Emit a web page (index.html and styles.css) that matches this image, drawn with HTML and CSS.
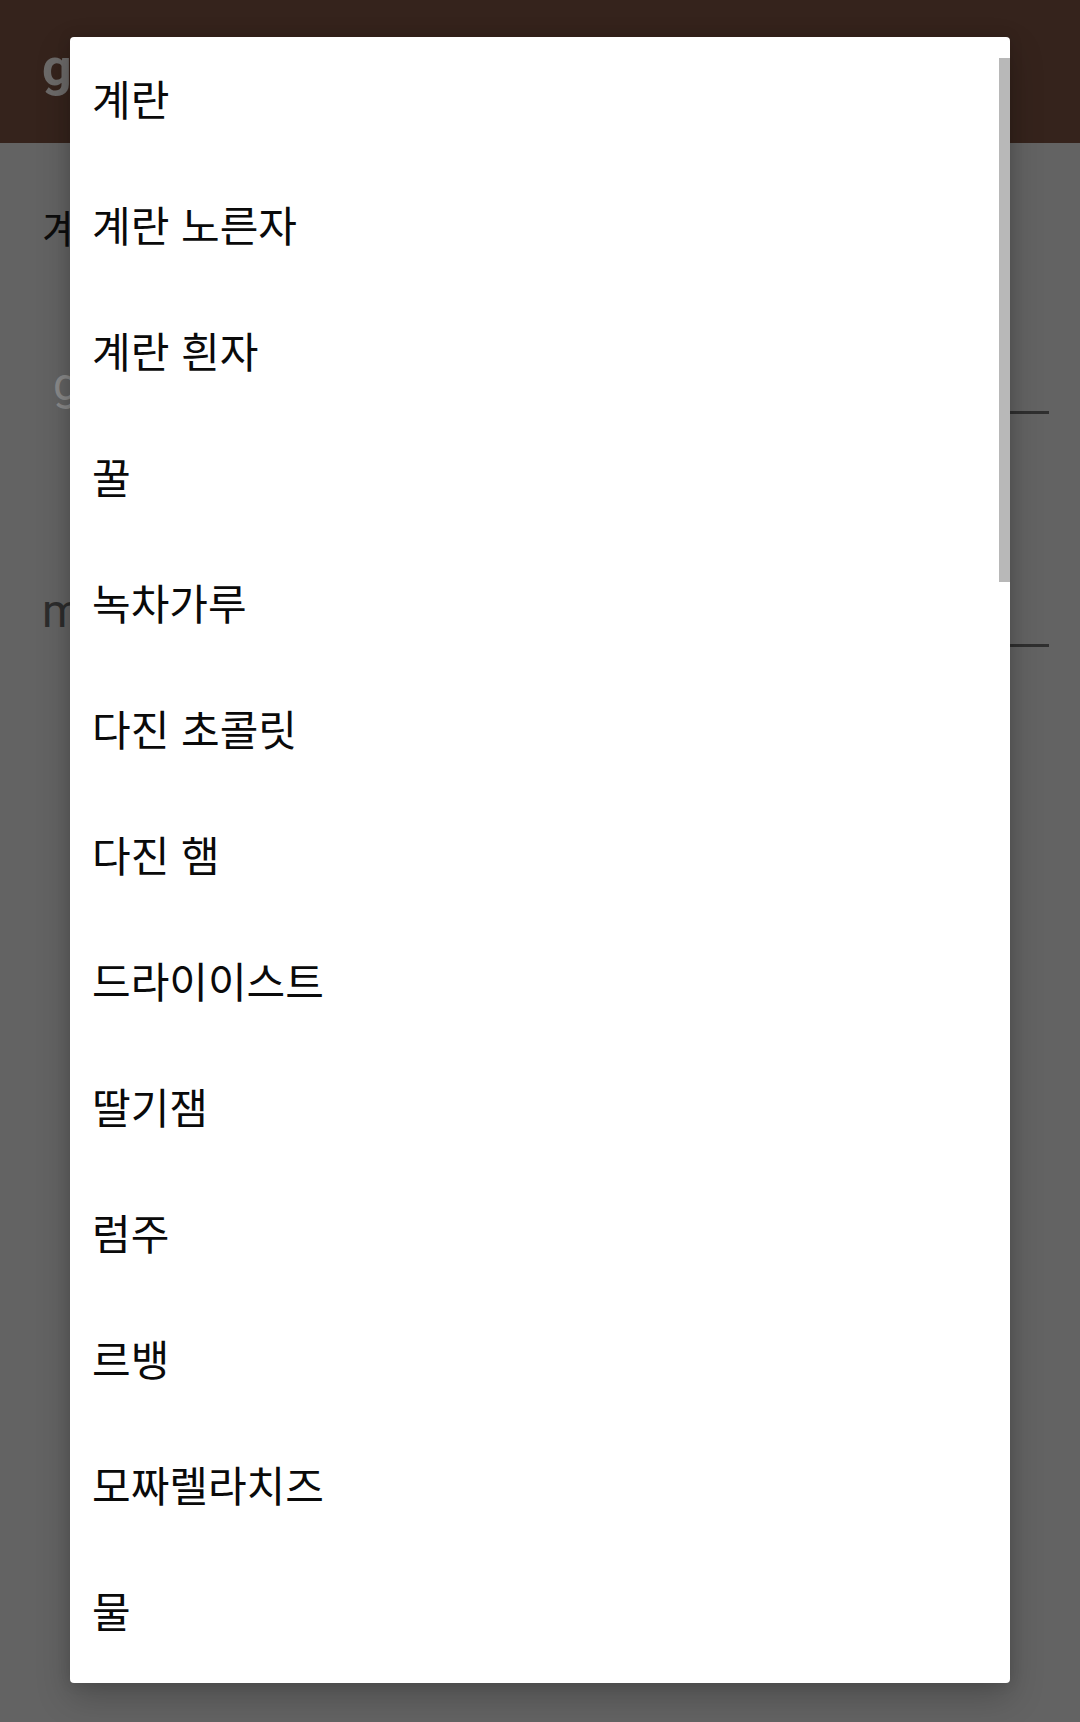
FILE: index.html
```html
<!DOCTYPE html>
<html lang="ko">
<head>
<meta charset="utf-8">
<title>재료 선택</title>
<link rel="stylesheet" href="styles.css">
</head>
<body>
<div class="screen">
  <header class="appbar">
    <span class="appbar-title">g</span>
  </header>
  <main class="content">
    <div class="label">계</div>
    <div class="field">
      <span class="hint hint-light">g</span>
      <div class="field-input"></div>
    </div>
    <div class="field field-second">
      <span class="hint hint-dark">m</span>
      <div class="field-input"></div>
    </div>
  </main>

  <div class="dropdown">
    <ul class="options">
      <li class="option">계란</li>
      <li class="option">계란 노른자</li>
      <li class="option">계란 흰자</li>
      <li class="option">꿀</li>
      <li class="option">녹차가루</li>
      <li class="option">다진 초콜릿</li>
      <li class="option">다진 햄</li>
      <li class="option">드라이이스트</li>
      <li class="option">딸기잼</li>
      <li class="option">럼주</li>
      <li class="option">르뱅</li>
      <li class="option">모짜렐라치즈</li>
      <li class="option">물</li>
    </ul>
    <div class="scroll-thumb"></div>
  </div>
</div>
</body>
</html>
```
FILE: styles.css
```css
html, body {
  margin: 0;
  padding: 0;
}

body {
  width: 1080px;
  height: 1722px;
  overflow: hidden;
  background: #636363;
  font-family: "Noto Sans CJK KR", "Noto Sans", Roboto, sans-serif;
}

.screen {
  position: relative;
  width: 1080px;
  height: 1722px;
}

.appbar {
  height: 143px;
  background: #35231c;
  display: flex;
  align-items: center;
  padding-left: 42px;
  box-sizing: border-box;
}

.appbar-title {
  font-family: Roboto, "Noto Sans CJK KR", sans-serif;
  font-weight: 700;
  font-size: 52px;
  color: #6c6a69;
  line-height: 1;
  margin-top: -8px;
}

.content {
  padding: 0 31px 0 42px;
}

.label {
  margin-top: 60px;
  height: 48px;
  line-height: 48px;
  font-size: 42px;
  color: #0c0c0c;
}

.field {
  height: 63px;
  margin-top: 100px;
  display: flex;
  align-items: flex-start;
}

.field-second {
  margin-top: 170px;
}

.field-input {
  flex: 1;
  height: 60px;
  margin-left: 40px;
  border-bottom: 3px solid #2f2f2f;
}

.hint {
  font-family: Roboto, "Noto Sans", sans-serif;
  font-size: 46px;
  line-height: 1;
}

.hint-light {
  color: #8a8a8a;
  padding-left: 11px;
  margin-top: 10px;
}

.hint-dark {
  color: #2c2c2c;
  margin-top: 4px;
}

.dropdown {
  position: absolute;
  left: 70px;
  top: 37px;
  width: 940px;
  height: 1646px;
  background: #ffffff;
  border-radius: 4px;
  overflow: hidden;
  box-shadow: 0 14px 34px rgba(0, 0, 0, 0.22), 0 0 14px rgba(0, 0, 0, 0.12);
}

.options {
  list-style: none;
  margin: 0;
  padding: 0;
}

.option {
  height: 122px;
  line-height: 122px;
  padding: 0 0 4px 22px;
  font-size: 42px;
  color: #0a0a0a;
  white-space: nowrap;
}

.scroll-thumb {
  position: absolute;
  right: 0;
  top: 21px;
  width: 11px;
  height: 524px;
  background: #b8b8b8;
}
```
